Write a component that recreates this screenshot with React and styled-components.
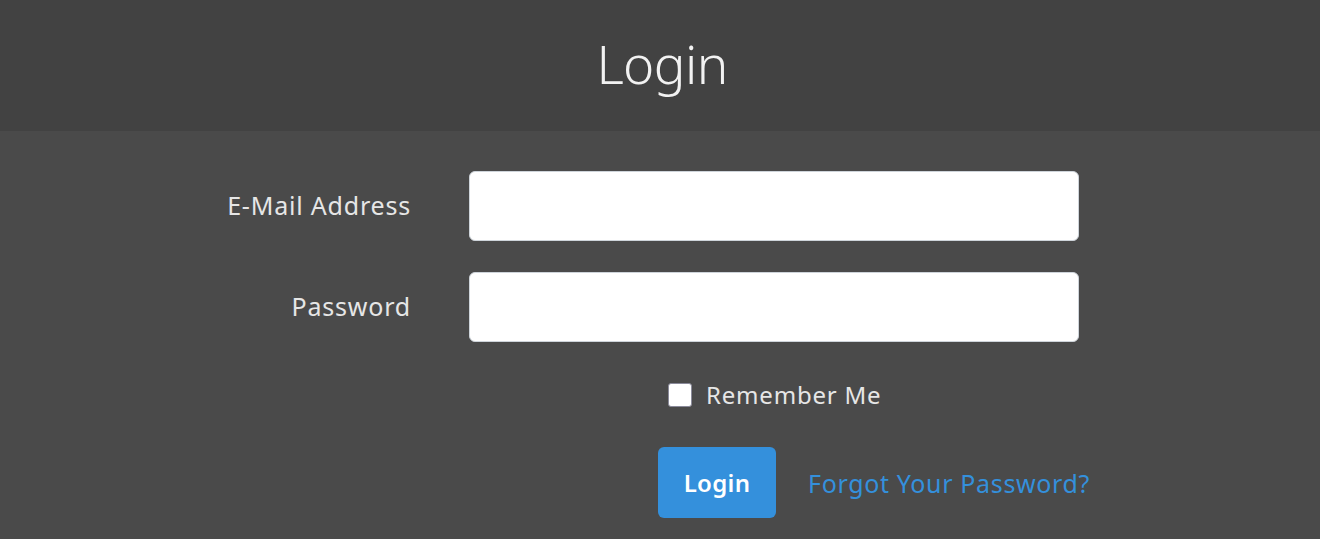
import React from 'react';
import styled, { createGlobalStyle } from 'styled-components';

const GlobalStyle = createGlobalStyle`
  html, body {
    margin: 0;
    padding: 0;
    background: #4a4a4a;
    font-family: 'Noto Sans', 'Open Sans', sans-serif;
  }
`;

const StyledPage = styled.div`
  width: 1320px;
  height: 539px;
  overflow: hidden;
  background: #4a4a4a;
`;
const StyledHeader = styled.header`
  height: 131px;
  background: #424242;
  display: flex;
  align-items: center;
  justify-content: center;
`;
const StyledTitle = styled.h1`
  margin: 0 0 4px 4px;
  font-size: 53px;
  font-weight: 300;
  color: #f2f2f2;
  letter-spacing: -0.6px;
`;
const StyledForm = styled.form`
  display: flex;
  flex-direction: column;
  padding-top: 40px;
`;
const StyledRow = styled.div`
  display: grid;
  grid-template-columns: 411px 610px;
  column-gap: 58px;
  align-items: center;
  margin-bottom: 31px;
`;
const StyledLabel = styled.label`
  text-align: right;
  font-size: 25px;
  letter-spacing: 0.8px;
  color: #e6e6e6;
  margin-top: -3px;
`;
const StyledInput = styled.input`
  box-sizing: border-box;
  height: 70px;
  width: 100%;
  border: 1px solid #ced4da;
  border-radius: 6px;
  background: #fff;
  outline: none;
`;
const StyledCheckRow = styled.div`
  display: flex;
  align-items: center;
  gap: 14px;
  margin-left: 668px;
  margin-top: 10px;
  height: 24px;
`;
const StyledCheckbox = styled.span`
  width: 24px;
  height: 24px;
  border-radius: 3px;
  background: #fff;
  box-sizing: border-box;
  border: 1px solid #8a8a9a;
`;
const StyledCheckLabel = styled.span`
  font-size: 24px;
  letter-spacing: 0.8px;
  color: #e6e6e6;
  margin-top: -2px;
`;
const StyledActions = styled.div`
  display: flex;
  align-items: center;
  gap: 32px;
  margin-left: 658px;
  margin-top: 40px;
`;
const StyledButton = styled.button`
  width: 118px;
  height: 71px;
  border: none;
  border-radius: 6px;
  background: #3490dc;
  color: #fff;
  font-family: inherit;
  font-size: 24px;
  font-weight: 600;
  letter-spacing: 0.3px;
`;
const StyledLink = styled.a`
  font-size: 25px;
  letter-spacing: 0.65px;
  color: #3490dc;
  text-decoration: none;
`;

const App = () => (
  <StyledPage>
    <GlobalStyle />
    <StyledHeader>
      <StyledTitle>Login</StyledTitle>
    </StyledHeader>
    <StyledForm onSubmit={e => e.preventDefault()}>
      <StyledRow>
        <StyledLabel>E-Mail Address</StyledLabel>
        <StyledInput type="email" />
      </StyledRow>
      <StyledRow>
        <StyledLabel>Password</StyledLabel>
        <StyledInput type="password" />
      </StyledRow>
      <StyledCheckRow>
        <StyledCheckbox />
        <StyledCheckLabel>Remember Me</StyledCheckLabel>
      </StyledCheckRow>
      <StyledActions>
        <StyledButton type="submit">Login</StyledButton>
        <StyledLink href="#">Forgot Your Password?</StyledLink>
      </StyledActions>
    </StyledForm>
  </StyledPage>
);

export default App;
